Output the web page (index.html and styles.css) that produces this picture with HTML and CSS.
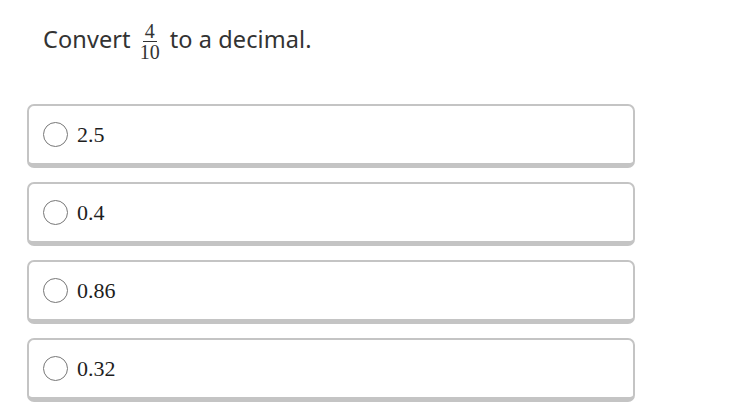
FILE: index.html
```html
<!DOCTYPE html>
<html>
<head>
<meta charset="utf-8">
<link rel="stylesheet" href="styles.css">
</head>
<body>
<div class="quiz">
  <h1 class="question"><span>Convert</span><span class="frac"><span class="num">4</span><span class="den">10</span></span><span>to a decimal.</span></h1>
  <div class="choices">
    <label class="choice"><span class="radio"></span><span class="value">2.5</span></label>
    <label class="choice"><span class="radio"></span><span class="value">0.4</span></label>
    <label class="choice"><span class="radio"></span><span class="value">0.86</span></label>
    <label class="choice"><span class="radio"></span><span class="value">0.32</span></label>
  </div>
</div>
</body>
</html>
```
FILE: styles.css
```css
html, body {
  margin: 0;
  padding: 0;
  background: #ffffff;
}

.quiz {
  padding: 17px 0 0 27px;
  width: 608px;
}

.question {
  margin: 0 0 0 16px;
  font-family: "Noto Sans", sans-serif;
  font-weight: 400;
  font-size: 23.5px;
  letter-spacing: 0.1px;
  color: #333333;
  display: flex;
  align-items: center;
  gap: 9px;
  height: 44px;
}

.frac {
  display: inline-flex;
  flex-direction: column;
  align-items: center;
  font-family: "Liberation Serif", serif;
  font-size: 20px;
  line-height: 16px;
  letter-spacing: 0;
  margin-right: 1px;
  padding-top: 4px;
}

.num {
  padding: 0 2px 2px;
  border-bottom: 1px solid #333;
}

.den {
  padding-top: 2px;
}

.choices {
  margin-top: 43px;
  display: flex;
  flex-direction: column;
  gap: 14px;
}

.choice {
  box-sizing: border-box;
  height: 64px;
  border: 2px solid #c4c4c4;
  border-bottom-width: 5px;
  border-radius: 7px;
  display: flex;
  align-items: center;
  padding: 0 0 0 14px;
  gap: 9px;
  background: #fff;
}

.radio {
  box-sizing: border-box;
  width: 25px;
  height: 25px;
  border: 1px solid #777;
  border-radius: 50%;
}

.value {
  font-family: "Liberation Serif", serif;
  font-size: 22px;
  color: #1e1e1e;
}
```
